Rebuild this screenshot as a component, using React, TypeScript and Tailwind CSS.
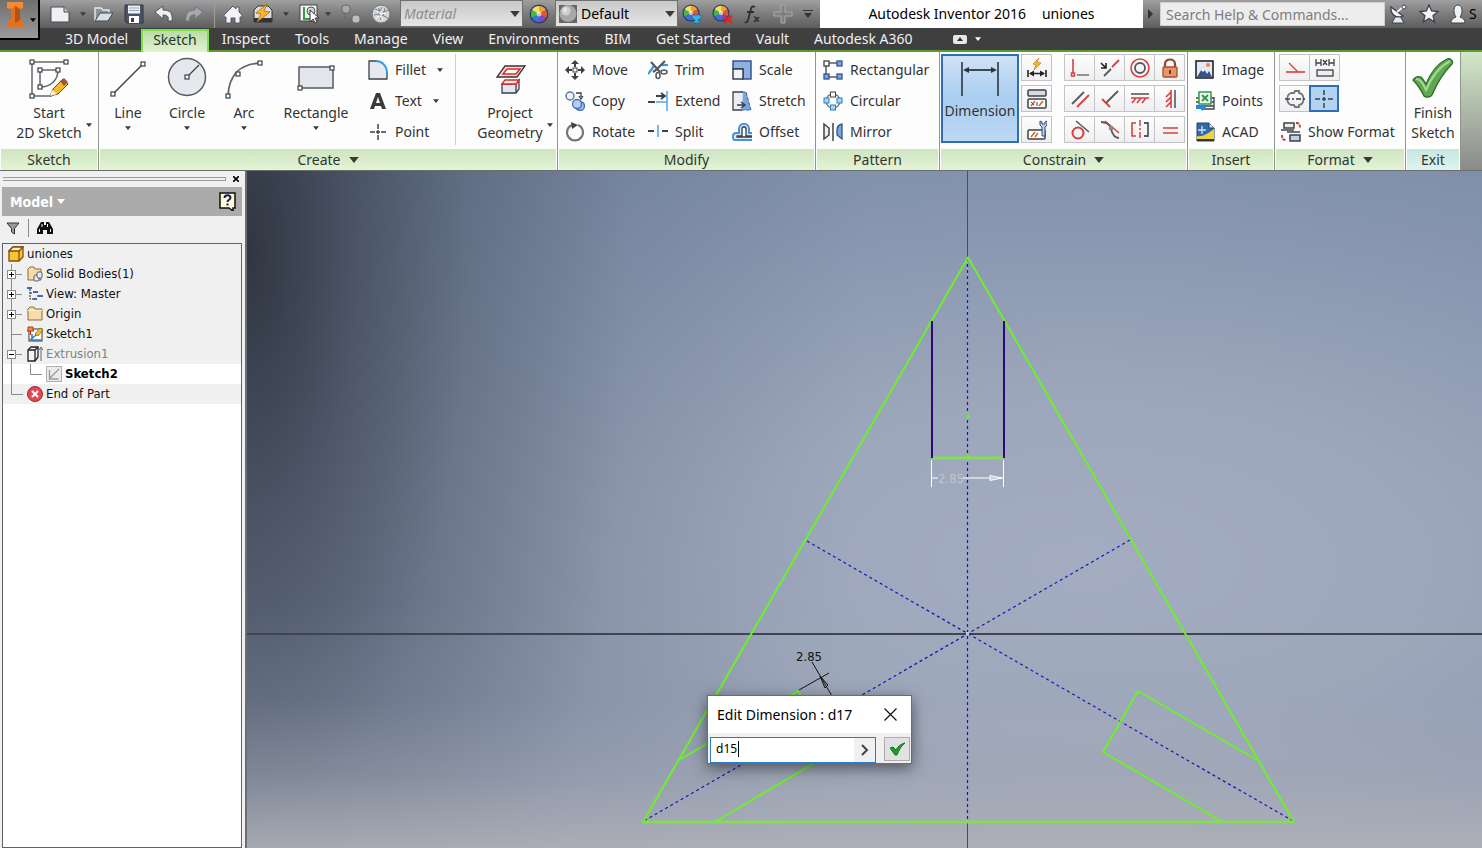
import type { ReactNode } from "react";

type IconProps = { w?: number; h?: number; children: ReactNode };

function Icon({ w = 20, h = 20, children }: IconProps) {
  return (
    <svg
      width={w}
      height={h}
      viewBox={`0 0 ${w} ${h}`}
      fill="none"
      className="block shrink-0"
      aria-hidden
    >
      {children}
    </svg>
  );
}

function Caret({ className = "text-[#3a3a3a]", w = 6 }: { className?: string; w?: number }) {
  return (
    <svg width={w} height={w / 2 + 1} viewBox="0 0 8 5" className={`block shrink-0 ${className}`} aria-hidden>
      <path d="M0 0h8L4 5z" fill="currentColor" />
    </svg>
  );
}

/* Small square grip used on sketch geometry icons */
function Grip({ x, y }: { x: number; y: number }) {
  return <rect x={x - 2} y={y - 2} width="4" height="4" fill="#fff" stroke="#3d4247" strokeWidth="1.2" />;
}

function ColorWheel() {
  return (
    <>
      <circle cx="10" cy="10" r="9.5" fill="#2c3e70" />
      <path d="M10 10V2A8 8 0 0 1 17 6z" fill="#f3a13c" />
      <path d="M10 10l7-4a8 8 0 0 1 0 8z" fill="#e2542c" />
      <path d="M10 10l7 4a8 8 0 0 1-7 4z" fill="#7c4ac0" />
      <path d="M10 10v8a8 8 0 0 1-7-4z" fill="#3f6fe0" />
      <path d="M10 10l-7 4a8 8 0 0 1 0-8z" fill="#48b54b" />
      <path d="M10 10L3 6a8 8 0 0 1 7-4z" fill="#f5e25a" />
      <circle cx="10" cy="10" r="2.5" fill="#fff" opacity=".6" />
    </>
  );
}

function QuickButton({ label, children }: { label: string; children: ReactNode }) {
  return (
    <button type="button" aria-label={label} className="flex h-7 items-center">
      {children}
    </button>
  );
}

function TitleBar() {
  return (
    <div className="flex h-7 bg-linear-to-b from-[#a0a0a0] via-[#7c7c7c] to-[#5e5e5e]">
      <div className="flex w-[400px] shrink-0 items-center pl-[50px]">
        <QuickButton label="New">
          <Icon w={22}>
            <path d="M1 3h13l5 5v10H1z" fill="#eef0f4" stroke="#444b55" />
            <path d="M14 3v5h5" fill="#c9ced8" stroke="#444b55" />
          </Icon>
          <span className="pl-2"><Caret /></span>
        </QuickButton>
        <div className="flex items-center gap-[10px] pl-2">
          <QuickButton label="Open">
            <Icon>
              <path d="M1 17V4h6l2 2h6v3" fill="#8b93a0" stroke="#e6e9ee" strokeWidth="1.4" />
              <path d="M1 17L6 9h13l-5 8z" fill="#d8dde6" stroke="#3f4650" />
            </Icon>
          </QuickButton>
          <QuickButton label="Save">
            <Icon>
              <path d="M1 1h18v18H3l-2-2z" fill="#4a5364" stroke="#2f3643" />
              <rect x="4" y="1.5" width="12" height="8" fill="#eef1f6" />
              <path d="M5 4h10M5 6.5h10" stroke="#9aa3b2" />
              <rect x="5" y="12" width="10" height="7" fill="#fff" />
              <rect x="7" y="14" width="3" height="4" fill="#39414f" />
            </Icon>
          </QuickButton>
          <QuickButton label="Undo">
            <Icon>
              <path d="M1 8l8-6v4c7 0 10 3 9 11h-4c1-5-1-6-5-6v4z" fill="#eef0f3" stroke="#4d535b" />
            </Icon>
          </QuickButton>
          <QuickButton label="Redo">
            <Icon>
              <path d="M19 8l-8-6v4c-7 0-10 3-9 11h4c-1-5 1-6 5-6v4z" fill="#a5a8ac" stroke="#707479" />
            </Icon>
          </QuickButton>
        </div>
        <span className="ml-[10px] h-7 w-px bg-[#9d9d9d]" />
        <div className="flex items-center gap-[10px] pl-2">
          <QuickButton label="Home">
            <Icon>
              <path d="M1 11L10 2l3 3V3h3v5l3 3v2h-2v6h-5v-5H8v5H3v-6H1z" fill="#f1f2f5" stroke="#555b64" />
            </Icon>
          </QuickButton>
          <QuickButton label="Local Update">
            <Icon>
              <path d="M1 6l4-4h10l4 4v12H1z" fill="#d9dce1" stroke="#333" />
              <path d="M1 14h18v4H1z" fill="#333" />
              <path d="M14 0L3 9l5 1-4 8L17 8l-6-1z" fill="#fbb72b" stroke="#b86a10" strokeWidth=".8" />
            </Icon>
            <span className="pl-[10px]"><Caret /></span>
          </QuickButton>
          <QuickButton label="Select">
            <Icon w={22}>
              <rect x="1" y="1" width="17" height="16" fill="#f4f6f5" stroke="#444" />
              <path d="M5 3v12h10" stroke="#3c9a45" strokeWidth="2" />
              <circle cx="12" cy="7" r="4" fill="#cfd6dd" stroke="#555" />
              <path d="M11 6v12l3-3 2 4 2-1-2-4h4z" fill="#fff" stroke="#333" />
            </Icon>
            <span className="pl-1"><Caret /></span>
          </QuickButton>
          <QuickButton label="Move Bodies">
            <Icon>
              <rect x="1" y="1" width="8" height="8" rx="3" fill="#a9a9a9" stroke="#6b6b6b" />
              <rect x="11" y="11" width="8" height="8" rx="3" fill="#bdbdbd" stroke="#6b6b6b" />
              <path d="M4 9v6h7" stroke="#6b6b6b" strokeWidth="1.5" strokeDasharray="2 1" />
            </Icon>
          </QuickButton>
          <QuickButton label="Adjust">
            <Icon>
              <circle cx="10" cy="10" r="9" fill="#d3d6da" stroke="#6d7278" />
              <path d="M4 5l5 2 2-4M3 11l5-1 2 6M12 8l6-2M11 11l6 3M8 4v6M14 4l-2 8" stroke="#7d838a" />
              <path d="M6 7l4 3 5-1M5 14l4-2 3 4" stroke="#fff" />
            </Icon>
          </QuickButton>
        </div>
      </div>
      <div className="relative mb-px flex w-[123px] shrink-0">
        <select
          aria-label="Material"
          className="w-full appearance-none border border-[#6f6f6f] bg-linear-to-b from-[#c8c8c8] to-[#e6e6e6] pl-[3px] text-sm text-[#8d8d8d] italic"
        >
          <option>Material</option>
        </select>
        <span className="pointer-events-none absolute top-[11px] right-[3px]"><Caret w={10} /></span>
      </div>
      <div className="flex w-8 shrink-0 items-center justify-center">
        <QuickButton label="Appearance Browser">
          <Icon><ColorWheel /></Icon>
        </QuickButton>
      </div>
      <div className="relative mb-px flex w-[123px] shrink-0">
        <select
          aria-label="Appearance"
          className="w-full appearance-none border border-[#6f6f6f] bg-linear-to-b from-[#c8c8c8] to-[#e6e6e6] pl-[25px] text-sm text-black"
        >
          <option>Default</option>
        </select>
        <span className="pointer-events-none absolute top-[5px] left-1">
          <Icon w={18} h={18}>
            <rect width="18" height="18" fill="#666" />
            <circle cx="9" cy="8.5" r="8.5" fill="#a8a8a8" />
            <circle cx="7" cy="6" r="4.5" fill="#d0d0d0" />
            <circle cx="6" cy="5" r="2" fill="#e6e6e6" />
          </Icon>
        </span>
        <span className="pointer-events-none absolute top-[11px] right-[3px]"><Caret w={10} /></span>
      </div>
      <div className="flex w-[142px] shrink-0 items-center gap-[10px] pl-1">
        <QuickButton label="Adjust Appearance">
          <Icon w={20}>
            <g transform="scale(.9)"><ColorWheel /></g>
            <path d="M10 11h9v3l-3 2v1h2v2h-7v-2h2v-1l-3-2z" fill="#35b4ea" stroke="#17678f" strokeWidth=".7" />
          </Icon>
        </QuickButton>
        <QuickButton label="Clear Appearance">
          <Icon w={21}>
            <g transform="scale(.9)"><ColorWheel /></g>
            <path d="M12 12l8 7M20 12l-8 7" stroke="#d8271f" strokeWidth="2.4" />
          </Icon>
        </QuickButton>
        <QuickButton label="Parameters">
          <Icon>
            <path d="M12 3c-3-2-4 1-4.5 4L5 16c-.5 2-2 3-3 2M4 8h7" stroke="#2d2d2d" strokeWidth="1.8" />
            <path d="M11 13c3-1 2 5 5 4M16 13l-5 5" stroke="#2d2d2d" strokeWidth="1.5" />
          </Icon>
        </QuickButton>
        <QuickButton label="Add">
          <Icon>
            <path d="M8 1h4v7h7v4h-7v7H8v-7H1V8h7z" fill="#808080" stroke="#ababab" />
          </Icon>
        </QuickButton>
        <QuickButton label="Customize">
          <Icon w={10} h={10}>
            <path d="M0 1.5h10" stroke="#333" />
            <path d="M1 4h8L5 9z" fill="#333" />
          </Icon>
        </QuickButton>
      </div>
      <h1 className="flex flex-1 items-center justify-center gap-4 bg-white text-sm whitespace-pre text-black">
        <span>Autodesk Inventor 2016</span>
        <span>uniones</span>
      </h1>
      <div className="flex w-[339px] shrink-0 items-center overflow-hidden pl-[5px]">
        <Icon w={6} h={10}><path d="M0 0l5 5-5 5z" fill="#333" /></Icon>
        <input
          type="search"
          aria-label="Search"
          placeholder="Search Help & Commands..."
          className="ml-[6px] h-6 w-[225px] shrink-0 border border-[#cfcfcf] bg-[#ededed] px-[5px] text-sm placeholder:text-[#7d7d7d]"
        />
        <div className="flex items-center gap-[10px] pl-1">
          <QuickButton label="Communication Center">
            <Icon>
              <path d="M6 13l-3 6h12l-4-7z" fill="#e4e8ef" stroke="#3b414a" />
              <path d="M2 3c-1 7 5 12 12 9z" fill="#f2f4f8" stroke="#3b414a" strokeWidth="1.3" />
              <path d="M8 8l6-5" stroke="#f2f4f8" strokeWidth="1.8" />
              <circle cx="15" cy="3" r="2" fill="#f2f4f8" stroke="#3b414a" />
            </Icon>
          </QuickButton>
          <QuickButton label="Favorites">
            <Icon>
              <path d="M10 1l2.6 6 6.4.5-5 4.3 1.7 6.2L10 14.5 4.3 18 6 11.800 1 7.5 7.4 7z" fill="#f3f5f8" stroke="#3b414a" strokeWidth="1.3" />
            </Icon>
          </QuickButton>
          <button type="button" className="flex h-7 items-center text-sm text-black">
            <Icon>
              <path d="M2 19c0-4 3-5 5-6-3-4-3-12 2-12s5 8 2 12c2 1 5 2 5 6z" fill="#eef1f6" stroke="#3b414a" />
            </Icon>
            <span>S</span>
          </button>
        </div>
      </div>
    </div>
  );
}

const TABS = [
  "3D Model",
  "Sketch",
  "Inspect",
  "Tools",
  "Manage",
  "View",
  "Environments",
  "BIM",
  "Get Started",
  "Vault",
  "Autodesk A360",
];

function TabBar() {
  return (
    <nav className="flex h-6 items-stretch gap-px border-b-2 border-[#5b9a35] bg-[#3f3f3f] pl-[53px] text-sm text-[#f0f0f0]">
      {TABS.map((tab) =>
        tab === "Sketch" ? (
          <button
            key={tab}
            type="button"
            className="mt-px -mb-[2px] flex items-center border-x-2 border-t-2 border-[#7be04b] bg-linear-to-b from-[#b9dba6] to-[#dff5d2] px-[10px] pb-[3px] text-[#2f2f2f]"
          >
            {tab}
          </button>
        ) : (
          <button key={tab} type="button" className="flex items-center px-3">
            {tab}
          </button>
        ),
      )}
      <button type="button" aria-label="Minimize ribbon" className="ml-7 flex items-center gap-2">
        <Icon w={14} h={9}>
          <rect width="14" height="9" rx="2" fill="#e4e6ec" />
          <path d="M4 6h6L7 2z" fill="#333" />
        </Icon>
        <Caret className="text-white" />
      </button>
    </nav>
  );
}

type PanelProps = {
  title: string;
  menu?: boolean;
  exit?: boolean;
  className: string;
  children: ReactNode;
};

function Panel({ title, menu, exit, className, children }: PanelProps) {
  return (
    <section className={`flex shrink-0 flex-col border-r border-[#8d978a] bg-[#fdfdfd] pr-px pl-px ${className}`}>
      <div className="flex h-[97px] pt-[2px]">{children}</div>
      <h2
        className={
          exit
            ? "flex h-[21px] items-center justify-center bg-linear-to-b from-[#c8e6e1] to-[#dcf5f0] text-sm text-[#333]"
            : "flex h-[21px] items-center justify-center gap-2 bg-linear-to-b from-[#cfe4c1] to-[#e2f5d6] text-sm text-[#333]"
        }
      >
        {title}
        {menu && <Caret w={10} />}
      </h2>
    </section>
  );
}

type BigToolProps = { lines: string[]; children: ReactNode; caret?: "none" | "below" | "side"; className: string };

function BigTool({ lines, children, caret = "none", className }: BigToolProps) {
  return (
    <button type="button" className={`flex shrink-0 flex-col items-center ${className}`}>
      <span className="flex h-[49px] items-center">{children}</span>
      <span className="flex items-center gap-1">
        {/* keeps the label centred under the icon */}
        {caret === "side" && <span className="w-[6px]" />}
        <span className="flex flex-col items-center">
          {lines.map((line) => (
            <span key={line} className="leading-5 whitespace-nowrap">{line}</span>
          ))}
        </span>
        {caret === "side" && <span className="pt-1"><Caret /></span>}
      </span>
      {caret === "below" && <span className="pt-[3px]"><Caret /></span>}
    </button>
  );
}

function Tool({ label, icon, caret }: { label: string; icon: ReactNode; caret?: boolean }) {
  return (
    <button type="button" className="flex h-[31px] items-center gap-[7px] whitespace-nowrap">
      <Icon>{icon}</Icon>
      <span>{label}</span>
      {caret && <span className="pl-1"><Caret /></span>}
    </button>
  );
}

function Mini({ label, children, active }: { label: string; children: ReactNode; active?: boolean }) {
  return (
    <button
      type="button"
      aria-label={label}
      className={
        active
          ? "-ml-px flex h-[27px] w-[30px] items-center justify-center border-2 border-[#2f6db5] bg-[#b3d3f3]"
          : "-ml-px flex h-[27px] w-[31px] items-center justify-center border border-[#c4c4c8] bg-linear-to-b from-[#fdfdfd] to-[#efeff1]"
      }
    >
      <Icon>{children}</Icon>
    </button>
  );
}

const DARK = "#3d4247";
const RED = "#d8403f";
const BLUE = "#3f6fb5";

function Ribbon() {
  return (
    <div className="flex border-b border-[#6c6c6c] bg-linear-to-b from-[#d3e8c8] to-[#8a8a8a] text-sm text-[#333]">
      <Panel title="Sketch" className="w-[99px]">
        <BigTool lines={["Start", "2D Sketch"]} caret="side" className="w-full">
          <Icon w={40} h={40}>
            <path d="M3 37V3h34M3 37h20M11 28V11h18M29 11c0 10-7 17-18 17" stroke="#63676c" strokeWidth="1.5" />
            <Grip x={3} y={3} />
            <Grip x={37} y={3} />
            <Grip x={3} y={37} />
            <Grip x={11} y={11} />
            <Grip x={29} y={11} />
            <Grip x={11} y={28} />
            <path d="M21 37l3-7L34 20l5 5-10 10z" fill="#f4b92c" stroke="#70490e" />
            <path d="M31 22l4-3 4 4-4 4z" fill="#9a5a3a" />
            <path d="M21 37l2-6 5 4z" fill="#fbf2d8" />
          </Icon>
        </BigTool>
      </Panel>

      <Panel title="Create" menu className="w-[459px]">
        <BigTool lines={["Line"]} caret="below" className="w-14">
          <Icon w={38} h={40}>
            <path d="M4 35L34 5" stroke={DARK} strokeWidth="1.5" />
            <Grip x={4} y={35} />
            <Grip x={34} y={5} />
          </Icon>
        </BigTool>
        <BigTool lines={["Circle"]} caret="below" className="w-[62px]">
          <Icon w={40} h={44}>
            <circle cx="20" cy="20" r="18.5" fill="#e6e8ee" stroke="#555a60" strokeWidth="1.5" />
            <path d="M20 20L32 8" stroke={DARK} strokeWidth="1.3" />
            <Grip x={20} y={20} />
          </Icon>
        </BigTool>
        <BigTool lines={["Arc"]} caret="below" className="w-[52px]">
          <Icon w={38} h={40}>
            <path d="M3 37C4 16 14 5 36 4" stroke="#63676c" strokeWidth="1.8" />
            <Grip x={3} y={37} />
            <Grip x={13} y={15} />
            <Grip x={35} y={4} />
          </Icon>
        </BigTool>
        <BigTool lines={["Rectangle"]} caret="below" className="w-[92px]">
          <Icon w={40} h={44}>
            <rect x="3" y="10" width="34" height="21" fill="#e4e6ee" stroke="#555a60" strokeWidth="1.5" />
            <Grip x={36} y={11} />
            <Grip x={4} y={31} />
          </Icon>
        </BigTool>
        <div className="flex w-[93px] shrink-0 flex-col items-start pl-[6px]">
          <Tool
            label="Fillet"
            caret
            icon={
              <>
                <path d="M1 19V1h7c6 0 11 5 11 12v6z" fill="#e6e8ee" />
                <path d="M8 1H1v18h18v-6" stroke={DARK} strokeWidth="1.3" />
                <path d="M8 1c6 0 11 5 11 12" stroke="#2f9be6" strokeWidth="2" />
              </>
            }
          />
          <Tool
            label="Text"
            caret
            icon={<path fillRule="evenodd" d="M2 18L8 2h4l6 16h-4l-1-3H7l-1 3zM8 12h4l-2-6z" fill="#3a3a3a" />}
          />
          <Tool
            label="Point"
            icon={
              <path d="M2 10h5M13 10h5M10 2v5M10 13v5M8 10h4M10 8v4" stroke={DARK} strokeWidth="1.5" />
            }
          />
        </div>
        <span className="mb-1 w-px shrink-0 bg-[#cfcfcf]" />
        <BigTool lines={["Project", "Geometry"]} caret="side" className="flex-1 pl-2">
          <Icon w={34} h={34}>
            <path d="M12 4h20l-8 11H4z" fill="#f7e4e4" stroke="#3a3030" strokeWidth="1.3" />
            <path d="M14 7h13l-4 5H10z" fill="#fff" stroke="#e02828" strokeWidth="1.6" />
            <path d="M9 22h14v9H9zM23 22l3-4v9l-3 4" fill="#e3e6ee" stroke={DARK} strokeWidth="1.3" />
            <path d="M9 22l3-4h14l-3 4z" fill="#ffe9e9" stroke="#e02828" strokeWidth="1.3" />
          </Icon>
        </BigTool>
      </Panel>

      <Panel title="Modify" className="w-[258px]">
        <div className="flex w-[84px] shrink-0 flex-col items-start pl-[6px]">
          <Tool
            label="Move"
            icon={
              <>
                <path d="M10 0l4 4h-3v3H9V4H6zM10 20l4-4h-3v-3H9v3H6zM0 10l4-4v3h3v2H4v3zM20 10l-4-4v3h-3v2h3v3z" fill={DARK} />
                <rect x="8" y="8" width="4" height="4" stroke={DARK} />
              </>
            }
          />
          <Tool
            label="Copy"
            icon={
              <>
                <circle cx="5" cy="5" r="4" fill="#eef3fb" stroke="#5d7ba5" strokeWidth="1.5" />
                <circle cx="15" cy="15" r="4.5" fill="#9db9e4" stroke={BLUE} strokeWidth="1.3" />
                <circle cx="12" cy="13" r="4.5" fill="#b7cdf0" stroke={BLUE} strokeWidth="1.3" />
                <path d="M11 2h5v4M14 5l2 3 2-3" stroke={DARK} strokeWidth="1.3" />
              </>
            }
          />
          <Tool
            label="Rotate"
            icon={
              <>
                <path d="M7 3a8 8 0 1 0 6 0" stroke="#74787d" strokeWidth="2.2" />
                <path d="M6 0l7 3-6 4z" fill={DARK} />
              </>
            }
          />
        </div>
        <div className="flex w-[83px] shrink-0 flex-col items-start pl-[5px]">
          <Tool
            label="Trim"
            icon={
              <>
                <path d="M0 14L6 6" stroke="#2f9be6" strokeWidth="2.2" />
                <path d="M12 5h8" stroke="#2f9be6" strokeWidth="2.2" />
                <path d="M3 2l9 10M17 1L8 10l-3 2" stroke="#555a60" strokeWidth="2.2" />
                <ellipse cx="10" cy="15.500" rx="2" ry="3" stroke="#555a60" strokeWidth="1.6" />
                <ellipse cx="16" cy="12" rx="3" ry="2" stroke="#555a60" strokeWidth="1.6" />
              </>
            }
          />
          <Tool
            label="Extend"
            icon={
              <>
                <path d="M0 11h7M8 5h8M13 2l4 3-4 3" stroke={DARK} strokeWidth="1.8" />
                <path d="M8 11h11M19 0v20" stroke="#54a9ea" strokeWidth="1.6" />
              </>
            }
          />
          <Tool
            label="Split"
            icon={
              <>
                <path d="M0 9h6M14 9h6" stroke={DARK} strokeWidth="1.8" />
                <path d="M10 3v12" stroke="#54a9ea" strokeWidth="1.6" />
              </>
            }
          />
        </div>
        <div className="flex flex-1 flex-col items-start pl-[6px]">
          <Tool
            label="Scale"
            icon={
              <>
                <path d="M1 1h18v18h-8V9H1z" fill="#8fb1e2" stroke="#34558c" strokeWidth="1.5" />
                <rect x="1" y="9" width="10" height="10" fill="#f3f4f8" stroke={DARK} strokeWidth="1.5" />
              </>
            }
          />
          <Tool
            label="Stretch"
            icon={
              <>
                <path d="M9 1h5l5 18H9z" fill="#7ba5df" stroke="#3566a8" strokeDasharray="4 1" />
                <path d="M11 1H1v18h9" fill="#eceef4" stroke={DARK} strokeWidth="1.3" />
                <path d="M5 14h7M9 11l4 3-4 3" stroke={DARK} strokeWidth="1.5" />
              </>
            }
          />
          <Tool
            label="Offset"
            icon={
              <>
                <path d="M20 18H3c-3 0-3-7 1-7h3V7c0-7 10-7 10 0v4h3" fill="#dcebfa" stroke="#4a90d9" strokeWidth="2" />
                <path d="M20 15H5v-1h5V7c0-3 4-3 4 0v7h6" fill="#fff" stroke={DARK} strokeWidth="1.4" />
              </>
            }
          />
        </div>
      </Panel>

      <Panel title="Pattern" className="w-[124px]">
        <div className="flex flex-col items-start pl-[6px]">
          <Tool
            label="Rectangular"
            icon={
              <>
                <path d="M3 3h14M3 3v14M3 17h14" stroke="#555a60" strokeWidth="1.5" />
                <rect x="1" y="1" width="5" height="5" fill="#fff" stroke={DARK} strokeWidth="1.3" />
                <rect x="14" y="1" width="5" height="5" fill="#7ba5df" stroke="#34558c" strokeWidth="1.3" />
                <rect x="1" y="14" width="5" height="5" fill="#7ba5df" stroke="#34558c" strokeWidth="1.3" />
                <rect x="14" y="14" width="5" height="5" fill="#7ba5df" stroke="#34558c" strokeWidth="1.3" />
              </>
            }
          />
          <Tool
            label="Circular"
            icon={
              <>
                <circle cx="10" cy="10" r="7" stroke="#777c82" strokeWidth="1.3" />
                <rect x="7.5" y="1" width="5" height="5" fill="#fff" stroke={DARK} />
                <rect x="1" y="7" width="5" height="5" fill="#a9d5f5" stroke="#2f7cc0" />
                <rect x="14" y="7" width="5" height="5" fill="#a9d5f5" stroke="#2f7cc0" />
                <rect x="7.5" y="14" width="5" height="5" fill="#a9d5f5" stroke="#2f7cc0" />
              </>
            }
          />
          <Tool
            label="Mirror"
            icon={
              <>
                <path d="M1 2l5 4v7l-5 4z" fill="#eef0f6" stroke={DARK} strokeWidth="1.5" />
                <path d="M19 2c-4 1-5 3-5 6v5l5 4z" fill="#7ba5df" stroke="#34558c" strokeWidth="1.3" />
                <path d="M10 1v18" stroke={DARK} strokeWidth="1.5" />
              </>
            }
          />
        </div>
      </Panel>

      <Panel title="Constrain" menu className="w-[248px]">
        <button
          type="button"
          className="flex h-[89px] w-[78px] shrink-0 flex-col items-center border-2 border-[#2f6db5] bg-linear-to-b from-[#cfe2f6] via-[#a9cdf0] to-[#bcd8f4]"
        >
          <span className="flex h-[45px] items-center">
            <Icon w={40} h={36}>
              <path d="M2 1v34M38 1v34M5 9h30" stroke="#3c4856" strokeWidth="1.8" />
              <path d="M3 9l6-3v6zM37 9l-6-3v6z" fill="#2c3540" />
            </Icon>
          </span>
          <span className="leading-5">Dimension</span>
        </button>
        <div className="flex w-[43px] shrink-0 flex-col gap-1 pl-[3px]">
          <Mini label="Auto Dimension">
            <path d="M12 0L6 6l3 1-2 5 7-7-4-1z" fill="#fbb72b" stroke="#c47a10" strokeWidth=".7" />
            <path d="M1 12v7M19 12v7M3 15.5h14" stroke="#222" strokeWidth="1.6" />
            <path d="M2 15.5l5-3v6zM18 15.5l-5-3v6z" fill="#222" />
          </Mini>
          <Mini label="Show Constraints">
            <rect x="1" y="1" width="18" height="6" rx="1" fill="#d6dae2" stroke={DARK} strokeWidth="1.5" />
            <rect x="1" y="10" width="18" height="9" rx="1" fill="#fff" stroke={DARK} strokeWidth="1.5" />
            <path d="M4 17l4-5M12 17l4-5" stroke="#d8641f" strokeWidth="1.6" />
            <path d="M4 13l3 3M10 13v4" stroke={DARK} />
          </Mini>
          <Mini label="Constraint Settings">
            <rect x="1" y="10" width="17" height="9" rx="1" fill="#fff" stroke={DARK} strokeWidth="1.5" />
            <path d="M4 17l4-5M8 17l3-4" stroke="#d8641f" strokeWidth="1.5" />
            <path d="M13 1v4l2 2v9h3V7l2-2V1l-2 1v2h-3V2z" fill="#bcd0ea" stroke="#2c4f80" />
          </Mini>
        </div>
        <div className="flex flex-col gap-1 pl-[3px]">
          <div className="flex">
            <Mini label="Coincident">
              <path d="M3 1v14" stroke={RED} strokeWidth="1.6" />
              <rect x="1.5" y="15" width="3" height="3" stroke={RED} strokeWidth="1.5" />
              <path d="M7 17h12" stroke="#74787d" strokeWidth="1.6" />
            </Mini>
            <Mini label="Collinear">
              <path d="M4 18l7-7" stroke="#555a60" strokeWidth="1.8" />
              <path d="M12 9l7-7" stroke={RED} strokeWidth="1.8" />
              <path d="M1 5l5 5M6 5v5H1" stroke="#222" strokeWidth="1.6" />
            </Mini>
            <Mini label="Concentric">
              <circle cx="10" cy="10" r="9" stroke={RED} strokeWidth="1.6" />
              <circle cx="10" cy="10" r="5" stroke="#555a60" strokeWidth="1.8" />
            </Mini>
            <Mini label="Fix">
              <path d="M5 9V6c0-6 10-6 10 0v3" stroke="#8c4a2c" strokeWidth="2.2" />
              <rect x="3" y="9" width="14" height="10" rx="1" fill="#e8956b" stroke="#a3502b" strokeWidth="1.3" />
              <path d="M10 12v4" stroke="#7a3317" strokeWidth="2" />
            </Mini>
          </div>
          <div className="flex">
            <Mini label="Parallel">
              <path d="M2 15L14 3" stroke="#555a60" strokeWidth="1.8" />
              <path d="M7 18L19 6" stroke={RED} strokeWidth="1.8" />
            </Mini>
            <Mini label="Perpendicular">
              <path d="M2 10l8 8" stroke={RED} strokeWidth="1.8" />
              <path d="M6 14L18 2" stroke="#555a60" strokeWidth="1.8" />
            </Mini>
            <Mini label="Horizontal">
              <path d="M1 5h18" stroke="#555a60" strokeWidth="1.6" />
              <path d="M1 9h18M6 9l-4 5M11 9l-4 5M16 9l-4 5" stroke={RED} strokeWidth="1.6" />
            </Mini>
            <Mini label="Vertical">
              <path d="M15 1v18" stroke="#555a60" strokeWidth="1.6" />
              <path d="M11 1v18M11 3L6 8M11 8l-5 5M11 13l-5 5" stroke={RED} strokeWidth="1.6" />
            </Mini>
          </div>
          <div className="flex">
            <Mini label="Tangent">
              <circle cx="8" cy="13" r="5.5" stroke={RED} strokeWidth="2" />
              <path d="M6 1l13 11" stroke="#555a60" strokeWidth="1.6" />
            </Mini>
            <Mini label="Smooth">
              <path d="M1 2c6 0 9 3 10 7s3 9 8 9" stroke="#555a60" strokeWidth="1.8" />
              <path d="M5 1l14 12" stroke={RED} strokeWidth="1.6" />
              <rect x="9" y="6" width="4" height="4" fill="#888" />
            </Mini>
            <Mini label="Symmetric">
              <path d="M6 3H2v13h4" stroke={RED} strokeWidth="1.6" />
              <path d="M14 3h4v13h-4" stroke="#555a60" strokeWidth="1.8" />
              <path d="M10 0v19" stroke={RED} strokeWidth="1.5" strokeDasharray="6 2 2 2" />
            </Mini>
            <Mini label="Equal">
              <path d="M3 8h15M3 13h15" stroke={RED} strokeWidth="1.6" />
            </Mini>
          </div>
        </div>
      </Panel>

      <Panel title="Insert" className="w-[87px]">
        <div className="flex flex-col items-start pl-[6px]">
          <Tool
            label="Image"
            icon={
              <>
                <rect x="1" y="1" width="17" height="17" fill="#e3eaf6" stroke="#222" strokeWidth="1.6" />
                <path d="M2 17l6-10 4 7 2-3 3 6z" fill="#34558c" />
                <path d="M6 10l2-3 2 3-2 2z" fill="#fff" />
                <circle cx="13" cy="5" r="2" fill="#e8864a" />
              </>
            }
          />
          <Tool
            label="Points"
            icon={
              <>
                <path d="M1 7h18M1 11h18M1 15h18M6 18h13V6" stroke={DARK} strokeWidth="1.3" />
                <rect x="4" y="1" width="12" height="12" fill="#f2faf3" stroke="#2f9a48" strokeWidth="1.5" />
                <path d="M7 4l6 6M13 4l-6 6" stroke="#2f9a48" strokeWidth="2" />
                <path d="M1 15h6v-2l4 3.5L7 20v-2H1z" fill="#2f86d8" />
              </>
            }
          />
          <Tool
            label="ACAD"
            icon={
              <>
                <path d="M2 1h12l5 5v13H2z" fill="#2e6ba8" stroke="#27415f" />
                <path d="M2 18v-4c6 1 10-2 17-7v11z" fill="#f3d13c" />
                <path d="M14 1v5h5" fill="#dce6f2" stroke="#27415f" />
                <path d="M3 8h8M7 4v8" stroke="#cfe4f8" strokeWidth="1.3" />
                <path d="M2 17h17v2H2z" fill="#333" />
              </>
            }
          />
        </div>
      </Panel>

      <Panel title="Format" menu className="w-[131px]">
        <div className="flex flex-col items-start pl-[5px]">
          <div className="-ml-px flex h-[31px]">
            <Mini label="Construction">
              <path d="M1 14h19" stroke={RED} strokeWidth="1.6" />
              <path d="M4 5l9 9" stroke={RED} strokeWidth="1.3" />
            </Mini>
            <Mini label="Driven Dimension">
              <path d="M1 1v7M6 1v7M1 5h5M14 1v7M19 1v7M14 5h5M8 2l4 5M12 2L8 7" stroke={DARK} strokeWidth="1.3" />
              <rect x="2" y="12" width="16" height="6" fill="#eceef2" stroke={DARK} strokeWidth="1.3" />
            </Mini>
          </div>
          <div className="-ml-px flex h-[31px]">
            <Mini label="Centerline">
              <path d="M6 4h3l1-2h4v2c6 1 6 11 0 12v2h-4l-1-2H6c-5-2-5-10 0-12z" stroke="#74787d" strokeWidth="1.8" />
              <path d="M0 10h20" stroke={DARK} strokeWidth="1.5" strokeDasharray="5 2 2 2" />
            </Mini>
            <Mini label="Center Point" active>
              <path d="M1 10h5M14 10h5M10 1v5M10 14v5M8 10h4M10 8v4" stroke={DARK} strokeWidth="1.5" />
            </Mini>
          </div>
          <Tool
            label="Show Format"
            icon={
              <>
                <rect x="3" y="1" width="10" height="5" fill="#eceef2" stroke={DARK} strokeWidth="1.5" />
                <path d="M0 8h13" stroke={DARK} strokeWidth="1.5" />
                <rect x="9" y="13" width="10" height="6" fill="#c4cfe2" stroke={DARK} strokeWidth="1.5" />
                <path d="M6 10h13" stroke={DARK} strokeWidth="1.5" />
                <path d="M15 1c3 0 4 1 4 5M1 13c0 4 1 5 4 5" stroke="#e02828" strokeWidth="1.8" strokeDasharray="3 1" />
              </>
            }
          />
        </div>
      </Panel>

      <Panel title="Exit" exit className="w-[55px]">
        <BigTool lines={["Finish", "Sketch"]} className="w-full">
          <Icon w={42} h={42}>
            <path
              d="M1 22c2-3 5-4 8-3 2 2 3 4 5 7C18 16 25 6 35 1c3-1 7 2 5 5C32 14 25 25 20 37c-1 2-6 3-8 1C9 32 6 27 1 22z"
              fill="#5fa84f"
              stroke="#2f6b28"
              strokeWidth="1.3"
            />
            <path d="M4 21c5 0 7 5 10 11C19 20 27 9 38 3" stroke="#a4d795" strokeWidth="2" />
          </Icon>
        </BigTool>
      </Panel>
    </div>
  );
}

type Node = { label: string; toggle?: "+" | "-"; child?: boolean; last?: boolean; tone?: string; icon: ReactNode };

const NODES: Node[] = [
  {
    label: "Solid Bodies(1)",
    toggle: "+",
    icon: (
      <>
        <path d="M1 14V3l2-2h4l1 2h6v11z" fill="#f6dcab" stroke="#8b6a36" />
        <rect x="7" y="9" width="5" height="6" rx="1.5" fill="#e8ecf2" stroke="#4a5568" />
        <rect x="10" y="6" width="5" height="6" rx="1.5" fill="#e8ecf2" stroke="#4a5568" />
      </>
    ),
  },
  {
    label: "View: Master",
    toggle: "+",
    icon: (
      <>
        <path d="M3 3v10h3M3 7h3M10 10h2" stroke="#222" strokeDasharray="2 1" />
        <path d="M0 1h5v2H0zM6 5h5v2H6zM6 12h4v2H6zM11 9h5v2h-5z" fill="#3d6ea8" />
      </>
    ),
  },
  {
    label: "Origin",
    toggle: "+",
    icon: (
      <>
        <path d="M1 14V3l2-2h4l1 2h7v11z" fill="#f6dcab" stroke="#8b6a36" />
        <path d="M1 4.500h14" stroke="#fdf1d4" />
      </>
    ),
  },
  {
    label: "Sketch1",
    icon: (
      <>
        <rect x="2" y="3" width="13" height="12" fill="#fff" stroke="#333" />
        <path d="M3 14L14 5M5 8v6h9" stroke="#2f7cc0" strokeWidth="1.5" />
        <path d="M8 8l5-6 3 2-5 6z" fill="#f4b92c" stroke="#6b4a10" strokeWidth=".6" />
        <path d="M1 1h5v3l1 1H0l1-1zM3.5 5v4" fill="#f08a50" stroke="#b03820" />
      </>
    ),
  },
  {
    label: "Extrusion1",
    toggle: "-",
    tone: "text-[#808080]",
    icon: (
      <>
        <path d="M1 4l3-3h7v10l-3 4H1z" fill="#f4f4f4" stroke="#222" strokeWidth="1.3" />
        <path d="M1 4h7v11M8 4l3-3" stroke="#222" strokeWidth="1.3" />
        <path d="M14 15V2M12 4l2-3 2 3" stroke="#666" />
      </>
    ),
  },
  {
    label: "Sketch2",
    child: true,
    tone: "font-bold text-black",
    icon: (
      <>
        <rect x=".5" y=".5" width="15" height="15" fill="#ececec" stroke="#b0b0b0" />
        <path d="M3.500 4v9h9M4 12L13 3" stroke="#9a9a9a" strokeWidth="1.3" />
      </>
    ),
  },
  {
    label: "End of Part",
    last: true,
    icon: (
      <>
        <circle cx="8" cy="8" r="7.5" fill="#e04a52" stroke="#9c2530" />
        <path d="M5 5l6 6M11 5l-6 6" stroke="#fff" strokeWidth="2" />
      </>
    ),
  },
];

function TreeRow({ node }: { node: Node }) {
  return (
    <li className={node.child ? "flex h-5 items-center bg-white" : "flex h-5 items-center bg-[#f0f0f0]"}>
      {/* connector lines and the expand box */}
      <Icon w={node.child ? 43 : 24}>
        <path d={node.last ? "M8.5 0v10.500H20" : node.child ? "M8.5 0v20M27.500 0v10.500H39" : "M8.5 0v20M8 10.5H19"} stroke="#8a8a8a" />
        {node.toggle && (
          <>
            <rect x="4.5" y="6.5" width="8" height="8" fill="#fff" stroke="#8a8a8a" />
            <path d={node.toggle === "+" ? "M6 10.5h5M8.5 8v5" : "M6 10.5h5"} stroke="#000" />
          </>
        )}
      </Icon>
      <Icon w={16} h={16}>{node.icon}</Icon>
      <span className={`pl-[3px] ${node.tone ?? "text-[#111]"}`}>{node.label}</span>
    </li>
  );
}

function ModelBrowser() {
  return (
    <aside className="flex w-[247px] shrink-0 flex-col border-r-2 border-[#6a6d72] bg-[#f0f0f0] pr-[3px] pl-[2px] font-['DejaVu_Sans_Condensed','DejaVu_Sans',sans-serif] text-[13px]">
      <div className="flex h-4 items-center gap-1 pl-px">
        <span className="h-1 flex-1 border border-l-0 border-[#9a9a9a]" />
        <button type="button" aria-label="Close panel" className="flex w-3 justify-center">
          <Icon w={6} h={6}>
            <path d="M0 0l6 6M6 0L0 6" stroke="#000" strokeWidth="1.6" />
          </Icon>
        </button>
      </div>
      <div className="flex h-[29px] items-center justify-between bg-[#ababab] pr-[6px] pl-2 text-white">
        <button type="button" className="flex items-center gap-1 text-sm font-bold">
          Model <Caret className="text-white" w={8} />
        </button>
        <button type="button" aria-label="Help">
          <Icon w={17} h={19}>
            <path d="M1 1h15v15h-2v3l-4-3H1z" fill="#fffbd6" stroke="#111" strokeWidth="1.5" />
            <path d="M5.500 6c0-3.500 6-3.500 6-.5 0 2.500-3 2-3 4.500M8.500 11.500v2" stroke="#111a66" strokeWidth="2" />
          </Icon>
        </button>
      </div>
      <div className="flex h-[27px] items-center gap-2 pb-[3px] pl-1">
        <button type="button" aria-label="Filter">
          <Icon w={14} h={13}>
            <path d="M1 1h12L8.500 6.5V12l-3-2V6.5z" fill="#9a9a9a" stroke="#333" />
          </Icon>
        </button>
        <span className="h-[18px] w-px bg-[#8a8a8a]" />
        <button type="button" aria-label="Find">
          <Icon w={16} h={14}>
            <path d="M4 1h3v3h2V1h3l4 7v5h-6V9H6v4H0V8z" fill="#111" />
            <path d="M2.500 8v3M13.500 8v3M5 3v3M10.500 3v3" stroke="#fff" />
          </Icon>
        </button>
      </div>
      <ul className="flex-1 border border-[#5f6369] bg-white">
        <li className="flex h-5 items-center gap-[3px] bg-[#f0f0f0] pl-[5px]">
          <Icon w={16} h={16}>
            <path d="M1 5l4-4h10v10l-4 4H1z" fill="#f7c52e" stroke="#8a4a10" strokeWidth="1.3" />
            <path d="M1 5l4-4h10l-4 4z" fill="#fff3c0" stroke="#8a4a10" strokeWidth="1.3" />
            <path d="M11 5v10" stroke="#8a4a10" strokeWidth="1.3" />
          </Icon>
          <span className="text-[#111]">uniones</span>
        </li>
        {NODES.map((node) => (
          <TreeRow key={node.label} node={node} />
        ))}
      </ul>
    </aside>
  );
}

function SketchGeometry() {
  return (
    <svg viewBox="247 171 1235 677" className="absolute inset-0 h-full w-full overflow-visible" fill="none" aria-label="Sketch2">
      {/* axes */}
      <path d="M-2000 634H4000" stroke="#3f454c" strokeWidth="2" />
      <path d="M967.5 -1000V2000" stroke="#4a4f57" />
      {/* construction lines */}
      <g stroke="#1414b8" strokeDasharray="3 3" strokeWidth="1.2">
        <path d="M967.5 258V822" stroke="#a0a9bd" strokeDasharray="none" />
        <path d="M967.5 258V822" />
        <path d="M807 541L1293 821" />
        <path d="M1130 540L644 821" />
      </g>
      {/* profile */}
      <g stroke="#6cf02a" strokeWidth="2" strokeLinejoin="round">
        <path d="M968 257.500L1294 822H643z" />
        <path d="M932 458H1004" stroke="#84dc58" strokeWidth="3" />
        <path d="M643 822H1294" stroke="#84dc58" strokeWidth="3" />
        <path d="M1257 760L1138 691L1103 752L1221 821" />
        <path d="M679 760L798 691L833 752L715 822" />
      </g>
      <path d="M932 321V458M1004 321V458" stroke="#2c0a72" strokeWidth="2" />
      <circle cx="968" cy="416" r="2" fill="#6cf02a" />
      <circle cx="968" cy="457" r="2" fill="#6cf02a" />
      <rect x="966" y="632" width="3" height="3" fill="#c4c8d8" />
      {/* width dimension */}
      <g stroke="#fff">
        <path d="M931.5 460V487M1003.5 460V487M932 478H938M963 478H1003" />
        <path d="M990 475.500l12 2.500-12 2.500z" fill="#c9cede" />
      </g>
      <text x="938" y="483" fill="#c3c5cc" className="font-['DejaVu_Sans_Condensed','DejaVu_Sans',sans-serif] text-[13px]">2.85</text>
      {/* dimension being placed */}
      <g stroke="#111">
        <path d="M799 690L829 673M812 662L832 696" />
        <path d="M820 676l8 9-3 3z" />
      </g>
      <text x="796" y="661" fill="#111" className="font-['DejaVu_Sans_Condensed','DejaVu_Sans',sans-serif] text-[13px]">2.85</text>
    </svg>
  );
}

function EditDimensionDialog() {
  return (
    <div
      role="dialog"
      aria-label="Edit Dimension"
      className="absolute top-[524px] left-[460px] flex w-[205px] flex-col border border-[#2b7cc4] bg-white text-black shadow-[0_4px_14px_rgba(0,0,0,0.5)]"
    >
      <div className="flex h-[37px] items-center justify-between pr-[14px] pl-[9px] text-sm">
        <label htmlFor="dimension">Edit Dimension : d17</label>
        <button type="button" aria-label="Close">
          <Icon w={13} h={13}>
            <path d="M.5.5l12 12M12.5.5l-12 12" stroke="#111" strokeWidth="1.2" />
          </Icon>
        </button>
      </div>
      <div className="flex gap-2 bg-[#f0f0f0] pt-1 pr-px pl-[2px]">
        <div className="relative flex h-[26px] flex-1 border border-[#2b7cc4] bg-white">
          <input
            id="dimension"
            defaultValue="d15"
            className="w-0 flex-1 pb-[3px] pl-[5px] text-xs outline-none"
          />
          <span className="absolute top-[3px] left-[27px] h-4 w-px bg-black" />
          <button type="button" aria-label="Recent values" className="flex w-[21px] items-center justify-center bg-[#f0f0f0]">
            <Icon w={8} h={12}>
              <path d="M1 1l5 5-5 5" stroke="#444" strokeWidth="2" />
            </Icon>
          </button>
        </div>
        <button type="button" aria-label="Accept" className="flex h-6 w-[26px] items-center justify-center border border-[#adadad] bg-[#e1e1e1]">
          <Icon w={16} h={14}>
            <path d="M1 6l3-1 3 3c2-4 5-6 9-7-4 3-6 7-8 12H6z" fill="#1f9a32" stroke="#157525" />
          </Icon>
        </button>
      </div>
    </div>
  );
}

export default function App() {
  return (
    <div className="flex min-h-screen flex-col bg-[#f0f0f0] font-['Noto_Sans','Open_Sans',sans-serif]">
      <header className="relative">
        <TitleBar />
        <TabBar />
        {/* application menu hangs over the tab strip */}
        <button
          type="button"
          aria-label="Application menu"
          className="absolute top-0 left-0 flex h-10 w-10 items-center gap-[6px] border-r-2 border-b-2 border-black bg-linear-to-b from-[#6f6f6f] to-[#9b9b9b] pb-[10px] pl-[6px]"
        >
          <Icon w={18} h={28}>
            <path d="M1 2h16v6l-3 1v11l3 1v6H1v-6l4-1V9L1 8z" fill="#e2701f" />
            <path d="M1 2h16v6l-3 1-5-3-4 3-4-1z" fill="#f58a35" />
            <path d="M9 6l5 3v11l-5 3z" fill="#b94f12" />
          </Icon>
          <span className="pt-3"><Caret className="text-black" /></span>
        </button>
      </header>
      <Ribbon />
      <div className="flex flex-1">
        <ModelBrowser />
        <main className="relative flex-1 overflow-hidden bg-[linear-gradient(to_top,rgba(178,179,185,0.85)_0%,rgba(172,174,182,0.42)_11%,rgba(165,168,180,0.12)_22%,rgba(160,165,178,0)_36%),radial-gradient(50%_240%_at_0%_12%,rgb(48,54,65)_0%,rgba(52,59,71,0.68)_18%,rgba(58,66,80,0.4)_36%,rgba(70,80,98,0.15)_62%,rgba(90,100,120,0)_100%),radial-gradient(ellipse_at_68%_58%,#a3acc0_0%,#9da7bb_30%,#8896b0_62%,#7385a2_100%)]">
          <SketchGeometry />
          <EditDimensionDialog />
        </main>
      </div>
    </div>
  );
}
